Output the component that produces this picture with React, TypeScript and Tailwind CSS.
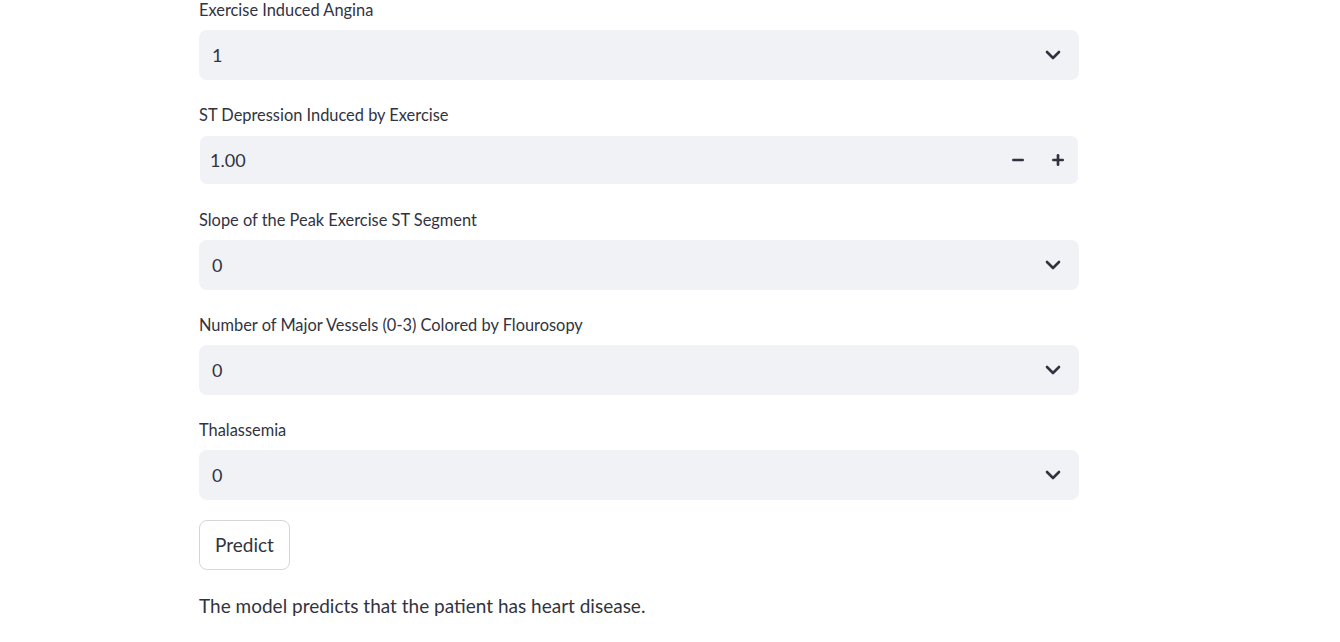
import { ChevronDown, Minus, Plus } from 'lucide-react';

const font = { fontFamily: 'Lato, "Open Sans", sans-serif' };

const SelectBox = ({ label, value }: { label: string; value: string }) => (
  <div className="flex flex-col">
    <label className="h-5 text-[16.4px] leading-5 text-[#31333f]">{label}</label>
    <div className="mt-[10px] flex h-[50px] items-center justify-between rounded-lg bg-[#f0f2f6] pl-[13px] pr-[14px]">
      <span className="text-[18px] text-[#31333f]">{value}</span>
      <ChevronDown className="h-6 w-6 text-[#31333f]" strokeWidth={2.6} />
    </div>
  </div>
);

const NumberBox = ({ label, value }: { label: string; value: string }) => (
  <div className="flex flex-col">
    <label className="h-5 text-[16.4px] leading-5 text-[#31333f]">{label}</label>
    <div className="mt-[10px] flex h-[50px] items-center justify-between rounded-lg border border-white bg-[#f0f2f6] pl-[10px]">
      <span className="text-[18px] text-[#31333f]">{value}</span>
      <div className="flex h-full items-center">
        <button className="flex h-full w-10 items-center justify-center text-[#31333f]" type="button">
          <Minus className="h-4 w-4" strokeWidth={4} />
        </button>
        <button className="flex h-full w-10 items-center justify-center text-[#31333f]" type="button">
          <Plus className="h-4 w-4" strokeWidth={4} />
        </button>
      </div>
    </div>
  </div>
);

export default function App() {
  return (
    <div className="min-h-[642px] w-full bg-white" style={font}>
      <div className="ml-[199px] flex w-[880px] flex-col">
        <div className="flex flex-col gap-[25px]">
          <SelectBox label="Exercise Induced Angina" value="1" />
          <NumberBox label="ST Depression Induced by Exercise" value="1.00" />
          <SelectBox label="Slope of the Peak Exercise ST Segment" value="0" />
          <SelectBox label="Number of Major Vessels (0-3) Colored by Flourosopy" value="0" />
          <SelectBox label="Thalassemia" value="0" />
        </div>
        <div className="mt-5">
          <button
            className="h-[50px] w-[91px] rounded-lg border border-[#d6d6d9] bg-white text-[19px] text-[#31333f]"
            type="button"
          >
            Predict
          </button>
        </div>
        <p className="mt-6 text-[19px] leading-6 text-[#31333f]">
          The model predicts that the patient has heart disease.
        </p>
      </div>
    </div>
  );
}
